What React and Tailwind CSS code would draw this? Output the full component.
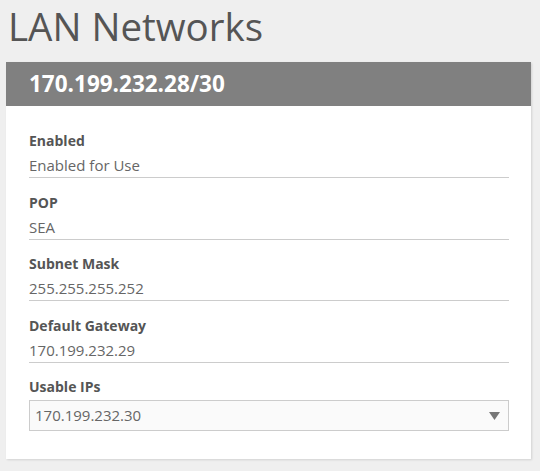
const FIELDS = [
  { label: "Enabled", value: "Enabled for Use" },
  { label: "POP", value: "SEA" },
  { label: "Subnet Mask", value: "255.255.255.252" },
  { label: "Default Gateway", value: "170.199.232.29" },
];

export default function App() {
  return (
    <div className="min-h-[471px] w-[540px] bg-[#efefef] pl-[6px] pt-px text-[#555] [font-family:'Open_Sans',sans-serif]">
      <h1 className="ml-[2px] mt-[-1px] text-[38.5px] leading-[52px] font-normal text-[#555]">LAN Networks</h1>

      <div className="mt-[10px] w-[525px] bg-white shadow-[1px_1px_2px_rgba(0,0,0,0.12)]">
        <div className="flex h-[44px] items-center bg-[#808080] px-[23px]">
          <span className="text-[22.5px] font-bold text-white">170.199.232.28/30</span>
        </div>

        <div className="pl-[23px] pr-[22px] pt-[25px] pb-[28px]">
          {FIELDS.map((f) => (
            <div key={f.label} className="mb-[14.5px]">
              <div className="text-sm leading-5 font-bold text-[#555]">{f.label}</div>
              <div className="mt-[3px] border-b border-[#ccc] pb-px text-[15px] leading-[22px] text-[#666]">
                {f.value}
              </div>
            </div>
          ))}

          <div className="text-sm leading-5 font-bold text-[#555]">Usable IPs</div>
          <div className="mt-[3px] flex h-[31px] items-center justify-between border border-[#ccc] bg-[#fafafa] pl-[5px] pr-[8px]">
            <span className="text-[15px] text-[#666]">170.199.232.30</span>
            <svg width="11" height="8" viewBox="0 0 11 8">
              <path d="M0 0 L11 0 L5.5 8 Z" fill="#777" />
            </svg>
          </div>
        </div>
      </div>
    </div>
  );
}
